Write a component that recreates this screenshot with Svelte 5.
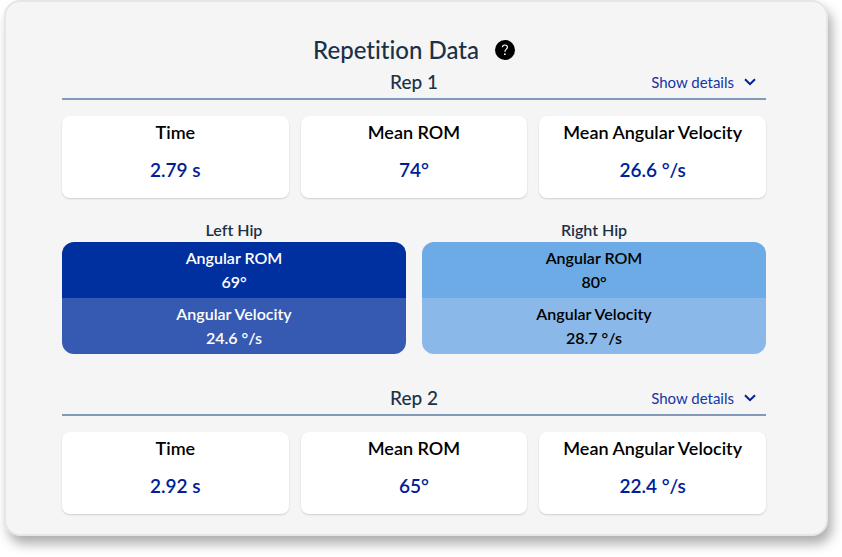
<script>
  const reps = [
    {
      name: 'Rep 1',
      stats: [
        { label: 'Time', value: '2.79 s' },
        { label: 'Mean ROM', value: '74°' },
        { label: 'Mean Angular Velocity', value: '26.6 °/s' }
      ],
      hips: [
        { side: 'left', name: 'Left Hip', rom: '69°', velocity: '24.6 °/s' },
        { side: 'right', name: 'Right Hip', rom: '80°', velocity: '28.7 °/s' }
      ]
    },
    {
      name: 'Rep 2',
      stats: [
        { label: 'Time', value: '2.92 s' },
        { label: 'Mean ROM', value: '65°' },
        { label: 'Mean Angular Velocity', value: '22.4 °/s' }
      ],
      hips: []
    }
  ];
</script>

<main class="panel">
  <header class="title">
    <h1>Repetition Data</h1>
    <button class="help" type="button" aria-label="Help">
      <svg width="20" height="20" viewBox="0 0 20 20" aria-hidden="true">
        <circle cx="10" cy="10" r="10" fill="#000" />
        <path d="M7.4 7.2C7.5 5.8 8.5 5 9.9 5c1.5 0 2.5.9 2.5 2.2 0 1.9-2.5 2-2.5 4.6" fill="none" stroke="#fff" stroke-width="1.2" />
        <circle cx="9.9" cy="14.2" r=".9" fill="#fff" />
      </svg>
    </button>
  </header>

  {#each reps as rep}
    <section class="rep">
      <div class="rep-head">
        <h2>{rep.name}</h2>
        <button class="details" type="button">
          Show details
          <svg width="12" height="8" viewBox="0 0 12 8" aria-hidden="true">
            <path d="M1 1.2L6 6.2L11 1.2" fill="none" stroke="#001e96" stroke-width="2" />
          </svg>
        </button>
      </div>

      <div class="stats">
        {#each rep.stats as stat}
          <div class="card">
            <h3>{stat.label}</h3>
            <p>{stat.value}</p>
          </div>
        {/each}
      </div>

      {#if rep.hips.length}
        <div class="hips">
          {#each rep.hips as hip}
            <div class="hip">
              <h3>{hip.name}</h3>
              <div class="box {hip.side}">
                <div class="cell rom"><p>Angular ROM</p><p>{hip.rom}</p></div>
                <div class="cell velocity"><p>Angular Velocity</p><p>{hip.velocity}</p></div>
              </div>
            </div>
          {/each}
        </div>
      {/if}
    </section>
  {/each}
</main>

<style>
  :global(body) {
    background: #fff;
  }
  .panel {
    box-sizing: border-box;
    margin: 0 14px 21px 4px;
    padding: 32px 60px 20px 56px;
    border: 2px solid #e6e6e6;
    border-radius: 16px;
    background: #f5f5f5;
    box-shadow: 4px 8px 12px rgba(0, 0, 0, 0.32);
    color: #1b3147;
    font-family: Lato, "Open Sans", sans-serif;
    font-variant-ligatures: none;
  }
  h1,
  h2,
  h3,
  p {
    margin: 0;
    font-weight: 500;
  }
  button {
    padding: 0;
    border: 0;
    background: none;
    font-family: inherit;
    cursor: pointer;
  }
  .title {
    display: flex;
    align-items: center;
    justify-content: center;
    gap: 16px;
    height: 32px;
  }
  h1 {
    font-size: 24px;
    line-height: 32px;
  }
  .help,
  .help svg {
    display: block;
  }
  .rep-head {
    display: grid;
    grid-template-columns: 1fr auto 1fr;
    align-items: center;
    border-bottom: 2px solid #8399ba;
  }
  h2 {
    grid-column: 2;
    font-size: 19px;
    line-height: 32px;
  }
  .details {
    display: flex;
    align-items: center;
    justify-self: end;
    gap: 10px;
    padding-right: 10px;
    color: #1436a6;
    font-size: 15px;
    font-weight: 400;
    line-height: 24px;
  }
  .stats {
    display: grid;
    grid-template-columns: repeat(3, 1fr);
    gap: 12px;
    margin-top: 16px;
  }
  .card {
    padding: 4px 4px 14px;
    border-radius: 8px;
    background: #fff;
    box-shadow: 0 1px 2px rgba(0, 0, 0, 0.16);
    text-align: center;
  }
  .card h3 {
    color: #000;
    font-size: 18px;
    line-height: 24px;
    font-weight: 600;
  }
  .card p {
    margin-top: 12px;
    color: #001e96;
    font-size: 19px;
    line-height: 28px;
    font-weight: 600;
  }
  .hips {
    display: grid;
    grid-template-columns: repeat(2, 1fr);
    gap: 16px;
    margin: 20px 0 28px;
    text-align: center;
  }
  .hip {
    font-size: 16px;
    line-height: 24px;
  }
  .hip h3 {
    font-size: inherit;
    font-weight: 600;
  }
  .box {
    overflow: hidden;
    border-radius: 12px;
  }
  .cell {
    padding: 4px;
  }
  .cell p {
    font-weight: 600;
  }
  .left {
    color: #fff;
  }
  .left .rom {
    background: #00309f;
  }
  .left .velocity {
    background: #365ab2;
  }
  .right {
    color: #000;
  }
  .right .rom {
    background: #6cabe5;
  }
  .right .velocity {
    background: #8ab8e8;
  }
</style>
